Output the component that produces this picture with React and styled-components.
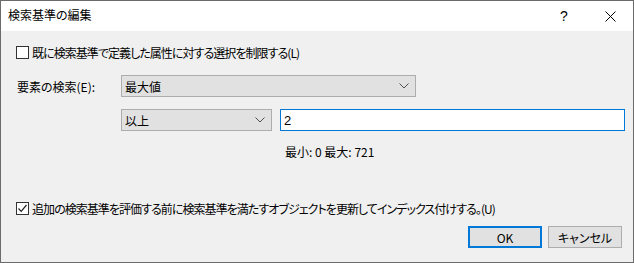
import { createGlobalStyle, styled } from "styled-components";

const GlobalStyle = createGlobalStyle`
  html, body {
    margin: 0;
    padding: 0;
    background: #ffffff;
  }
  body {
    font-family: "Noto Sans CJK JP", "Noto Sans", sans-serif;
    font-size: 12px;
    font-feature-settings: "palt";
    color: #000;
  }
`;

const Window = styled.div`
  width: 634px;
  height: 263px;
  box-sizing: border-box;
  border: 1px solid #6b6b6b;
  background: #f0f0f0;
  display: flex;
  flex-direction: column;
  overflow: hidden;
`;

const TitleBar = styled.div`
  height: 30px;
  background: #ffffff;
  display: flex;
  align-items: center;
  padding-left: 7px;
`;

const Title = styled.div`
  flex: 1;
  font-size: 12px;
  line-height: 14px;
  margin-top: -2px;
`;

const TitleButton = styled.div`
  width: 46px;
  height: 30px;
  display: flex;
  align-items: center;
  justify-content: center;
  font-family: "Liberation Sans", sans-serif;
  font-size: 14px;
  color: #000;
`;

const Body = styled.div`
  flex: 1;
  display: flex;
  flex-direction: column;
  padding: 0 9px 0 15px;
`;

const CheckRow = styled.label`
  display: flex;
  align-items: center;
  gap: 3px;
  height: 13px;
  margin-top: ${(p) => p.$top}px;
  white-space: nowrap;
  line-height: 13px;
  letter-spacing: -0.95px;
`;

const Box = styled.span`
  width: 13px;
  height: 13px;
  box-sizing: border-box;
  border: 1px solid #333333;
  background: #ffffff;
  display: flex;
  align-items: center;
  justify-content: center;
  flex-shrink: 0;
`;

const FieldRow = styled.div`
  display: grid;
  grid-template-columns: ${(p) => p.$columns};
  column-gap: 8px;
  align-items: center;
  margin-top: ${(p) => p.$top}px;
  padding-left: ${(p) => p.$indent || 0}px;
`;

const Label = styled.div`
  white-space: nowrap;
  padding-left: 1px;
`;

const Select = styled.div`
  height: 22px;
  box-sizing: border-box;
  border: 1px solid #adadad;
  background: #e1e1e1;
  display: flex;
  align-items: center;
  justify-content: space-between;
  padding: 0 6px 0 3px;
  width: ${(p) => p.$width}px;
`;

const Input = styled.div`
  height: 22px;
  box-sizing: border-box;
  border: 1px solid #0078d7;
  background: #ffffff;
  display: flex;
  align-items: center;
  padding-left: 3px;
  font-family: "Liberation Sans", sans-serif;
  font-size: 13px;
`;

const RangeText = styled.div`
  margin-top: 14px;
  padding-left: 269px;
  line-height: 14px;
  white-space: nowrap;
`;

const Buttons = styled.div`
  display: flex;
  justify-content: flex-end;
  gap: 6px;
  margin-top: 11px;
  padding-right: 2px;
`;

const Button = styled.div`
  width: 74px;
  height: 22px;
  box-sizing: border-box;
  border: ${(p) => (p.$primary ? "2px solid #0078d7" : "1px solid #adadad")};
  background: #e1e1e1;
  display: flex;
  align-items: center;
  justify-content: center;
  font-size: 12px;
`;

function Chevron() {
  return (
    <svg width="10" height="6" viewBox="0 0 10 6">
      <path d="M0.5 0.5 L5 5 L9.5 0.5" fill="none" stroke="#505050" strokeWidth="1" />
    </svg>
  );
}

function Check({ checked }) {
  return (
    <Box>
      {checked && (
        <svg width="11" height="11" viewBox="0 0 11 11">
          <path d="M1.5 5.5 L4.2 8.3 L9.5 2" fill="none" stroke="#222" strokeWidth="1.2" />
        </svg>
      )}
    </Box>
  );
}

export default function App() {
  return (
    <>
      <GlobalStyle />
      <Window>
        <TitleBar>
          <Title>検索基準の編集</Title>
          <TitleButton>?</TitleButton>
          <TitleButton>
            <svg width="11" height="11" viewBox="0 0 11 11">
              <path d="M0.5 0.5 L10.5 10.5 M10.5 0.5 L0.5 10.5" stroke="#000" strokeWidth="1" />
            </svg>
          </TitleButton>
        </TitleBar>
        <Body>
          <CheckRow $top={15}>
            <Check />
            既に検索基準で定義した属性に対する選択を制限する(L)
          </CheckRow>
          <FieldRow $top={16} $columns="97px 295px">
            <Label>要素の検索(E):</Label>
            <Select $width={295}>
              最大値
              <Chevron />
            </Select>
          </FieldRow>
          <FieldRow $top={12} $columns="151px 345px" $indent={105}>
            <Select $width={151}>
              以上
              <Chevron />
            </Select>
            <Input>2</Input>
          </FieldRow>
          <RangeText>最小: 0 最大: 721</RangeText>
          <CheckRow $top={43}>
            <Check checked />
            追加の検索基準を評価する前に検索基準を満たすオブジェクトを更新してインデックス付けする。(U)
          </CheckRow>
          <Buttons>
            <Button $primary>OK</Button>
            <Button>キャンセル</Button>
          </Buttons>
        </Body>
      </Window>
    </>
  );
}
